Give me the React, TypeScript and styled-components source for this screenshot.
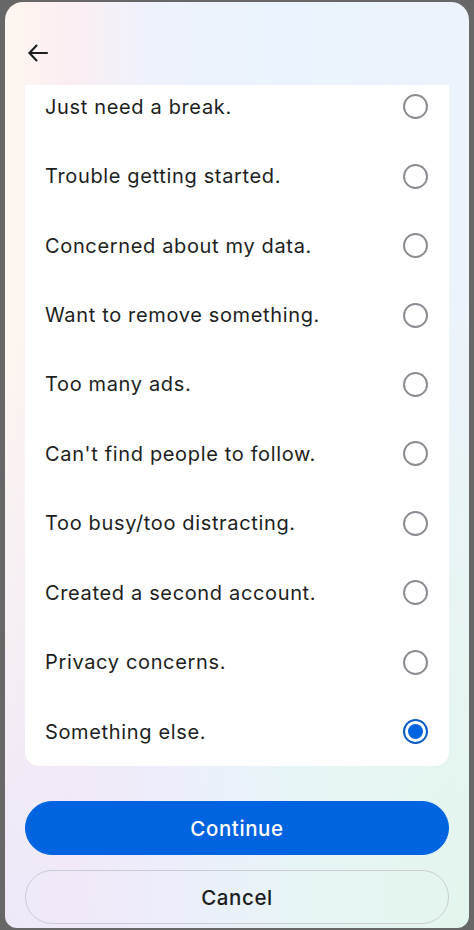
import React, { useState } from 'react';
import styled, { createGlobalStyle } from 'styled-components';

const GlobalStyle = createGlobalStyle`
  html, body {
    margin: 0;
    padding: 0;
    background: #676767;
  }
  * {
    box-sizing: border-box;
  }
`;

const REASONS = [
  'Just need a break.',
  'Trouble getting started.',
  'Concerned about my data.',
  'Want to remove something.',
  'Too many ads.',
  "Can't find people to follow.",
  'Too busy/too distracting.',
  'Created a second account.',
  'Privacy concerns.',
  'Something else.'
];

const Screen = styled.div`
  margin: 2px 5px 0;
  height: 926px;
  border-radius: 18px 18px 12px 12px;
  overflow: hidden;
  display: flex;
  flex-direction: column;
  padding: 0 20px;
  background:
    radial-gradient(ellipse at 0% 100%, rgba(236, 230, 250, 0.9) 0%, rgba(236, 230, 250, 0) 45%),
    radial-gradient(ellipse at 100% 100%, rgba(226, 246, 236, 0.95) 0%, rgba(226, 246, 236, 0) 50%),
    linear-gradient(90deg, #fdf6ef 0%, #fbeef3 14%, #eef2fc 32%, #eaf3fd 60%, #edf3fb 100%);
  font-family: Inter, 'Noto Sans', sans-serif;
  color: #1c1e21;
`;

const Header = styled.div`
  height: 83px;
  display: flex;
  align-items: flex-end;
  padding-bottom: 19px;
`;

const BackButton = styled.button`
  border: none;
  background: none;
  padding: 0;
  width: 26px;
  height: 26px;
  display: flex;
  align-items: center;
  justify-content: center;
  color: #1c1e21;
  cursor: pointer;
`;

const Card = styled.div`
  height: 681px;
  background: #fff;
  border-radius: 0 0 14px 14px;
  overflow: hidden;
`;

const List = styled.div`
  margin-top: -13px;
  display: flex;
  flex-direction: column;
`;

const Row = styled.label`
  height: 69.45px;
  display: flex;
  align-items: center;
  justify-content: space-between;
  padding: 0 21px 0 20px;
  cursor: pointer;
`;

const RowText = styled.span`
  font-size: 20px;
  font-weight: 400;
  letter-spacing: 0.65px;
`;

const Radio = styled.span<{ checked: boolean }>`
  width: 25px;
  height: 25px;
  border-radius: 50%;
  border: 2px solid ${({ checked }) => (checked ? '#0a5bc8' : '#8a8d91')};
  display: flex;
  align-items: center;
  justify-content: center;

  &::after {
    content: '';
    display: ${({ checked }) => (checked ? 'block' : 'none')};
    width: 15px;
    height: 15px;
    border-radius: 50%;
    background: #0064e0;
  }
`;

const Actions = styled.div`
  margin-top: 35px;
  display: flex;
  flex-direction: column;
  gap: 15px;
`;

const Button = styled.button<{ primary?: boolean }>`
  height: 54px;
  border-radius: 27px;
  font-family: Inter, 'Noto Sans', sans-serif;
  font-size: 20.5px;
  font-weight: 500;
  letter-spacing: 0.6px;
  cursor: pointer;
  border: 1px solid ${({ primary }) => (primary ? '#0064e0' : '#c9ccd1')};
  background: ${({ primary }) => (primary ? '#0064e0' : 'transparent')};
  color: ${({ primary }) => (primary ? '#fff' : '#1c1e21')};
`;

export default function App() {
  const [selected, setSelected] = useState(REASONS.length - 1);

  return (
    <>
      <GlobalStyle />
      <Screen>
        <Header>
          <BackButton aria-label='Back'>
            <svg width='24' height='24' viewBox='0 0 24 24' fill='none' stroke='currentColor' strokeWidth='2.1' strokeLinecap='round' strokeLinejoin='round'>
              <path d='M21 12H3.5' />
              <path d='M10.5 4.5L3.5 12l7 7.5' />
            </svg>
          </BackButton>
        </Header>
        <Card>
          <List>
            {REASONS.map((reason, i) => (
              <Row key={reason} onClick={() => setSelected(i)}>
                <RowText>{reason}</RowText>
                <Radio checked={selected === i} />
              </Row>
            ))}
          </List>
        </Card>
        <Actions>
          <Button primary>Continue</Button>
          <Button>Cancel</Button>
        </Actions>
      </Screen>
    </>
  );
}
